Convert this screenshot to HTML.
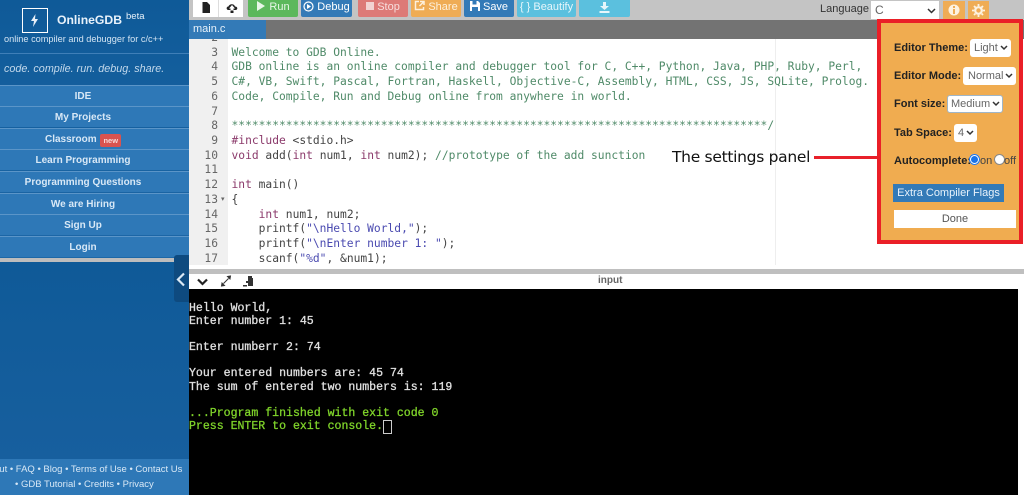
<!DOCTYPE html>
<html><head><meta charset="utf-8"><style>
html,body{margin:0;padding:0}
body{width:1024px;height:495px;overflow:hidden;position:relative;background:#fff;font-family:"Liberation Sans",sans-serif}
#wrap{position:absolute;left:0;top:0;width:1024px;height:495px;overflow:hidden;filter:blur(.3px)}
.a{position:absolute;white-space:nowrap}
#side{left:0;top:0;width:189px;height:495px;background:linear-gradient(#0f5a98 0,#2a74b5 100%);overflow:hidden}
.m{position:absolute;left:0;width:189px;padding-right:23px;box-sizing:border-box;height:21px;background:#2e78b7;border-top:1px solid #5b95c8;color:#d8e8f6;font-weight:bold;font-size:10px;line-height:21px;text-align:center}
.b{position:absolute;top:0;height:17px;font-size:11px;line-height:15px;color:#fff;text-align:center;white-space:nowrap;border-radius:0 0 2px 2px}
#code,#nums{font-family:"DejaVu Sans Mono",monospace;font-size:11.27px;line-height:14.72px;white-space:pre}
#nums{color:#666;text-align:right;width:30px;left:189px;top:30px;padding-right:0}
#code{left:231.5px;top:30px;color:#444}
.c{color:#4f8a68}.k{color:#8b3a6b}.s{color:#4a4ab0}
#con{left:189px;top:302px;font-family:"Liberation Mono",monospace;font-size:11.55px;line-height:13.1px;color:#e0e0e0;white-space:pre;-webkit-text-stroke:.3px}
.g{color:#7fd32a}
.l{position:absolute;font-size:11px;font-weight:bold;color:#222;white-space:nowrap}
.sel{position:absolute;background:#fff;border-radius:3px;font-size:11px;color:#666;height:18px;line-height:18px;padding-left:4px;box-sizing:border-box}
.sel svg{position:absolute;right:3px;top:6px}
</style></head><body><div id="wrap">
<div class="a" id="side">
 <div class="a" style="left:22px;top:8px;width:24px;height:23px;border:1.5px solid #fff"></div>
 <svg class="a" style="left:29px;top:13px" width="11" height="15" viewBox="0 0 11 15"><path d="M6.5 1 2 8h3l-1 6 5-8H6z" fill="#e8f0f8"/></svg>
 <div class="a" style="left:57px;top:13px;color:#e8f2fb;font-weight:bold;font-size:12.2px">OnlineGDB</div>
 <div class="a" style="left:126px;top:11px;color:#e8f2fb;font-size:9.5px">beta</div>
 <div class="a" style="left:4px;top:34px;font-size:9.2px;color:#d3e4f3">online compiler and debugger for c/c++</div>
 <div class="a" style="left:0;top:53px;width:189px;height:1px;background:#3f7fb8"></div>
 <div class="a" style="left:4px;top:63px;font-size:10.8px;font-style:italic;color:#c3d9ec">code. compile. run. debug. share.</div>
 <div class="m" style="top:85px">IDE</div>
 <div class="m" style="top:106px">My Projects</div>
 <div class="m" style="top:128px">Classroom <span style="background:#d9534f;color:#f6d9d8;font-size:7.5px;padding:2px 3px;border-radius:2px;vertical-align:-1px;margin-left:1px">new</span></div>
 <div class="m" style="top:149px">Learn Programming</div>
 <div class="m" style="top:171px">Programming Questions</div>
 <div class="m" style="top:193px">We are Hiring</div>
 <div class="m" style="top:214px">Sign Up</div>
 <div class="m" style="top:236px;height:21px">Login</div>
 <div class="a" style="left:0;top:258px;width:189px;height:4px;background:#bdbdbd"></div>
 <div class="a" style="left:0;top:262px;width:189px;height:197px;background:linear-gradient(#0f5a98,#175f9e)"></div>
 <div class="a" style="left:0;top:459px;width:189px;height:36px;background:#2e78b7"></div>
 <div class="a" style="left:-6px;top:464px;font-size:9.5px;color:#d8e8f6">out • FAQ • Blog • Terms of Use • Contact Us</div>
 <div class="a" style="left:15px;top:479px;font-size:9.5px;color:#d8e8f6">• GDB Tutorial • Credits • Privacy</div>
 <div class="a" style="left:174px;top:255px;width:15px;height:47px;background:#0e4a7f;border-radius:3px 0 0 3px"></div>
 <svg class="a" style="left:175px;top:272px" width="12" height="15" viewBox="0 0 12 15"><path d="M9 1.500 3 7.500l6 6" fill="none" stroke="#dbe9f5" stroke-width="2.200"/></svg>
</div>

<div class="a" style="left:189px;top:0;width:835px;height:20px;background:#c4c4c4"></div>
<div class="a" style="left:193px;top:0;width:50px;height:17px;background:#fff"></div>
<div class="a" style="left:218px;top:0;width:1px;height:17px;background:#ddd"></div>
<svg class="a" style="left:201px;top:2px" width="10" height="12" viewBox="0 0 10 12"><path d="M1.500 0H6l3 3v8H1.500z" fill="#222"/></svg>
<svg class="a" style="left:225px;top:2px" width="14" height="12" viewBox="0 0 14 12"><path d="M3.500 8C1 8 1 4.500 3.500 4.500 4 2 9 1 10 4.500c3 0 3 3.500.5 3.500H8.500V6.500H10L7 3 4 6.500h1.500V8z M5.500 8.500h3v2.500h-3z" fill="#222"/></svg>
<div class="b" style="left:248px;width:50px;background:#5cb85c;color:#e8f6e8"><svg width="10" height="10" viewBox="0 0 10 10" style="vertical-align:-1px"><path d="M1 0l8 5-8 5z" fill="#e8f6e8"/></svg> Run</div>
<div class="b" style="left:301px;width:51px;background:#337ab7"><svg width="11" height="11" viewBox="0 0 11 11" style="vertical-align:-1.500px"><circle cx="5.500" cy="5.500" r="4.500" fill="none" stroke="#fff" stroke-width="1.200"/><path d="M4 3l4 2.500L4 8z" fill="#fff"/></svg> Debug</div>
<div class="b" style="left:358px;width:50px;background:#dd7a77;color:#f7dedd"><span style="display:inline-block;width:8px;height:8px;background:#f2d3d2;vertical-align:0"></span> Stop</div>
<div class="b" style="left:411px;width:50px;background:#efac55;color:#fdf0dc"><svg width="11" height="11" viewBox="0 0 11 11" style="vertical-align:-1px"><path d="M5 1.500H1.500v8h8V7M6 1.500h4V5M10 1.500 5.500 6" fill="none" stroke="#fdf0dc" stroke-width="1.500"/></svg> Share</div>
<div class="b" style="left:464px;width:50px;background:#337ab7"><svg width="10" height="10" viewBox="0 0 10 10" style="vertical-align:-1px"><path d="M0 0h8l2 2v8H0zM2.500 0v3.500h4V0zM2 6v4h6V6z" fill="#fff" fill-rule="evenodd"/></svg> Save</div>
<div class="b" style="left:517px;width:59px;background:#5bc0de;color:#e6f6fb">{ } Beautify</div>
<div class="b" style="left:579px;width:51px;background:#5bc0de"><svg width="11" height="11" viewBox="0 0 11 11" style="margin-top:2px"><path d="M4 0h3v4h3L5.500 8 1 4h3zM.5 9h10v2H.500z" fill="#e6f6fb"/></svg></div>
<div class="a" style="left:820px;top:3px;font-size:11px;color:#333">Language</div>
<div class="a" style="left:871px;top:1px;width:68px;height:18px;background:#fff;font-size:12px;color:#666;line-height:18px;padding-left:4px;box-sizing:border-box">C<svg class="a" style="right:3px;top:7px" width="9" height="6" viewBox="0 0 9 6"><path d="M1 1l3.500 3.500L8 1" fill="none" stroke="#333" stroke-width="1.500"/></svg></div>
<div class="a" style="left:943px;top:1px;width:22px;height:18px;background:#efac55"></div>
<div class="a" style="left:968px;top:1px;width:21px;height:18px;background:#efac55"></div>
<svg class="a" style="left:948px;top:4px" width="12" height="12" viewBox="0 0 12 12"><circle cx="6" cy="6" r="5.500" fill="#fdf2e0"/><path d="M5 2h2v2H5zM5 5h2v5H5z" fill="#efac55"/></svg>
<svg class="a" style="left:972px;top:4px" width="13" height="13" viewBox="0 0 13 13"><circle cx="6.500" cy="6.500" r="3.300" fill="none" stroke="#fdf2e0" stroke-width="2.200"/><path d="M6.500 0v13M0 6.500h13M2 2l9 9M11 2l-9 9" stroke="#fdf2e0" stroke-width="1.800" stroke-dasharray="2.200 8.600 2.200"/></svg>

<div class="a" style="left:189px;top:20px;width:835px;height:19px;background:#737373"></div>
<div class="a" style="left:189px;top:20px;width:77px;height:19px;background:#337ab7;color:#e8f2fb;font-size:11px;line-height:19px;padding-left:4px;box-sizing:border-box">main.c</div>

<div class="a" style="left:189px;top:39px;width:39px;height:226px;background:#f0f0f0"></div>
<div class="a" style="left:775px;top:39px;width:1px;height:226px;background:#eee"></div>
<div class="a" style="left:189px;top:39px;width:835px;height:226px;overflow:hidden">
<div class="a" id="nums" style="left:-10px;top:-8px;width:39px">2
3
4
5
6
7
8
9
10
11
12
13
14
15
16
17</div>
<div class="a" id="code" style="left:42.5px;top:-8px">
<span class="c">Welcome to GDB Online.
GDB online is an online compiler and debugger tool for C, C++, Python, Java, PHP, Ruby, Perl,
C#, VB, Swift, Pascal, Fortran, Haskell, Objective-C, Assembly, HTML, CSS, JS, SQLite, Prolog.
Code, Compile, Run and Debug online from anywhere in world.

*******************************************************************************/</span>
<span class="k">#include</span> &lt;stdio.h&gt;
<span class="k">void</span> add(<span class="k">int</span> num1, <span class="k">int</span> num2); <span class="c">//prototype of the add sunction</span>

<span class="k">int</span> main()
{
    <span class="k">int</span> num1, num2;
    printf(<span class="s">"\nHello World,"</span>);
    printf(<span class="s">"\nEnter number 1: "</span>);
    scanf(<span class="s">"%d"</span>, &amp;num1);</div>
</div>
<div class="a" style="left:221px;top:195px;font-size:7px;color:#666">▾</div>

<div class="a" style="left:672px;top:148px;font-size:15.5px;color:#111;font-family:'DejaVu Sans',sans-serif;letter-spacing:-.3px">The settings panel</div>
<div class="a" style="left:814px;top:156px;width:64px;height:3px;background:#e8202a"></div>

<div class="a" style="left:877px;top:19px;width:146px;height:225px;box-sizing:border-box;border:4px solid #ea1f27;background:#f0ac50"></div>
<div class="l" style="left:894px;top:42px">Editor Theme:</div>
<div class="sel" style="left:970px;top:39px;width:41px">Light<svg width="8" height="6" viewBox="0 0 8 6"><path d="M1 1l3 3 3-3" fill="none" stroke="#333" stroke-width="1.500"/></svg></div>
<div class="l" style="left:894px;top:70px">Editor Mode:</div>
<div class="sel" style="left:963px;top:67px;width:53px;padding-left:5px">Normal<svg width="8" height="6" viewBox="0 0 8 6"><path d="M1 1l3 3 3-3" fill="none" stroke="#333" stroke-width="1.500"/></svg></div>
<div class="l" style="left:894px;top:98px">Font size:</div>
<div class="sel" style="left:947px;top:95px;width:56px;border:1px solid #9fb6c9;padding-left:3px;line-height:16px">Medium<svg style="top:5px;right:2px" width="8" height="6" viewBox="0 0 8 6"><path d="M1 1l3 3 3-3" fill="none" stroke="#333" stroke-width="1.500"/></svg></div>
<div class="l" style="left:894px;top:127px">Tab Space:</div>
<div class="sel" style="left:954px;top:124px;width:23px">4<svg width="8" height="6" viewBox="0 0 8 6"><path d="M1 1l3 3 3-3" fill="none" stroke="#333" stroke-width="1.500"/></svg></div>
<div class="l" style="left:894px;top:155px">Autocomplete:</div>
<div class="a" style="left:969px;top:154px;width:11px;height:11px;box-sizing:border-box;border-radius:50%;background:#1a73e8;border:2px solid #fff;outline:1px solid #1a73e8;outline-offset:-1px"></div>
<div class="a" style="left:980px;top:155px;font-size:11px;color:#444">on</div>
<div class="a" style="left:994px;top:154px;width:11px;height:11px;border-radius:50%;background:#fff;box-sizing:border-box;border:1px solid #888"></div>
<div class="a" style="left:1004px;top:155px;font-size:11px;color:#444">off</div>
<div class="a" style="left:893px;top:184px;width:111px;height:18px;background:#337ab7;color:#e8f2fb;font-size:11px;line-height:18px;text-align:center">Extra Compiler Flags</div>
<div class="a" style="left:894px;top:210px;width:122px;height:18px;background:#fff;color:#555;font-size:11px;line-height:18px;text-align:center">Done</div>

<div class="a" style="left:189px;top:269px;width:835px;height:5px;background:#bfbfbf"></div>
<div class="a" style="left:189px;top:274px;width:835px;height:15px;background:#fff"></div>
<svg class="a" style="left:197px;top:278px" width="11" height="8" viewBox="0 0 11 8"><path d="M1 1.500l4.500 4.500L10 1.500" fill="none" stroke="#222" stroke-width="2.200"/></svg>
<svg class="a" style="left:220px;top:275px" width="12" height="12" viewBox="0 0 12 12"><path d="M10.500 1 7.500 1.500l2.500 2.500zM1.500 11l3-.5L2 8zM3.500 8.500l5-5" fill="#333" stroke="#333"/></svg>
<svg class="a" style="left:243px;top:276px" width="11" height="11" viewBox="0 0 11 11"><path d="M5 0h4v2h1v8H5V7H3V5h2zM0 9h4v1.500H0z" fill="#333"/></svg>
<div class="a" style="left:598px;top:275px;font-size:10px;font-weight:bold;color:#666">input</div>
<div class="a" style="left:189px;top:289px;width:829px;height:206px;background:#000"></div>
<div class="a" style="left:1018px;top:289px;width:6px;height:206px;background:#fff"></div>
<div class="a" id="con">Hello World,
Enter number 1: 45

Enter numberr 2: 74

Your entered numbers are: 45 74
The sum of entered two numbers is: 119

<span class="g">...Program finished with exit code 0
Press ENTER to exit console.</span></div>
<div class="a" style="left:383px;top:420px;width:7px;height:12px;border:1px solid #ccc"></div>
</div></body></html>
